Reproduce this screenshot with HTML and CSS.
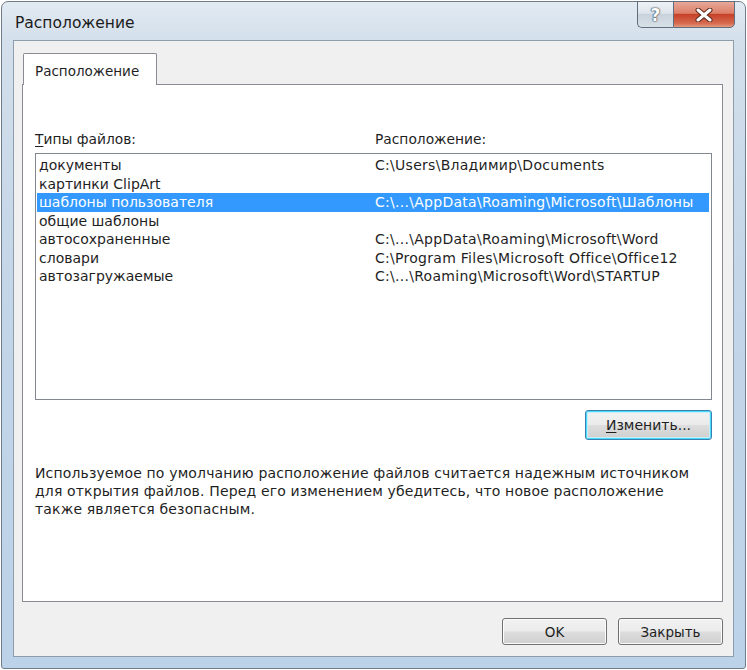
FILE: index.html
```html
<!DOCTYPE html>
<html lang="ru">
<head>
<meta charset="utf-8">
<title>Расположение</title>
<link rel="stylesheet" href="styles.css">
</head>
<body>
<div class="window">
  <div class="titlebar">
    <span class="title">Расположение</span>
    <div class="caption">
      <div class="cap help">?</div>
      <div class="cap close">
        <svg width="20" height="14" viewBox="0 0 20 14"><path d="M4 2 L16 12 M16 2 L4 12" stroke="#5a2a20" stroke-width="5" stroke-linecap="round"/><path d="M4 2 L16 12 M16 2 L4 12" stroke="#ffffff" stroke-width="3" stroke-linecap="round"/></svg>
      </div>
    </div>
  </div>
  <div class="client">
    <div class="tabs"><div class="tab">Расположение</div></div>
    <div class="panel">
      <div class="heads"><span><span class="ul">Т</span>ипы файлов:</span><span>Расположение:</span></div>
      <div class="list">
        <div class="row"><span>документы</span><span class="path">C:\Users\Владимир\Documents</span></div>
        <div class="row"><span>картинки ClipArt</span><span class="path"></span></div>
        <div class="row sel"><span>шаблоны пользователя</span><span class="path">C:\...\AppData\Roaming\Microsoft\Шаблоны</span></div>
        <div class="row"><span>общие шаблоны</span><span class="path"></span></div>
        <div class="row"><span>автосохраненные</span><span class="path">C:\...\AppData\Roaming\Microsoft\Word</span></div>
        <div class="row"><span>словари</span><span class="path">C:\Program Files\Microsoft Office\Office12</span></div>
        <div class="row"><span>автозагружаемые</span><span class="path">C:\...\Roaming\Microsoft\Word\STARTUP</span></div>
      </div>
      <div class="modrow"><button class="btn focus"><span class="ul">И</span>зменить...</button></div>
      <p class="note">Используемое по умолчанию расположение файлов считается надежным источником<br>для открытия файлов. Перед его изменением убедитесь, что новое расположение<br>также является безопасным.</p>
    </div>
    <div class="footer">
      <button class="btn small">OK</button>
      <button class="btn small">Закрыть</button>
    </div>
  </div>
</div>
</body>
</html>
```

FILE: styles.css
```css
* { box-sizing: border-box; }
html, body { margin: 0; padding: 0; background: #ffffff; }
body {
  width: 747px;
  height: 670px;
  padding: 1px;
  font-family: "DejaVu Sans", sans-serif;
  font-size: 13.5px;
  color: #1f1f1f;
}
.window {
  width: 745px;
  height: 668px;
  border: 1px solid #6f7c8a;
  border-radius: 7px 7px 3px 3px;
  background: linear-gradient(180deg, #e2eaf2 0%, #d3dfeb 6%, #c4d6e8 40%, #bcd2e8 100%);
  padding: 0 11px 11px 11px;
  display: flex;
  flex-direction: column;
}
.titlebar {
  height: 38px;
  display: flex;
  justify-content: space-between;
  align-items: flex-start;
  margin-left: -11px;
  margin-right: -1px;
  padding-left: 13px;
}
.title {
  font-size: 15.5px;
  color: #1b1b1b;
  line-height: 18px;
  margin-top: 12px;
}
.caption {
  display: flex;
  margin-top: -1px;
}
.cap {
  height: 27px;
  border: 1px solid #5f6d7c;
  display: flex;
  align-items: center;
  justify-content: center;
}
.help {
  width: 36px;
  border-right: none;
  border-radius: 0 0 0 5px;
  background: linear-gradient(180deg, #eef2f6 0%, #dde4eb 45%, #c9d2dc 50%, #d8e0e8 100%);
  color: #ffffff;
  font-family: "DejaVu Sans", sans-serif;
  font-weight: bold;
  font-size: 17px;
  text-shadow: 0 0 1px #3d4a57, 0 0 1px #3d4a57, 0 0 2px #3d4a57;
}
.close {
  width: 62px;
  border-radius: 0 0 5px 0;
  background: linear-gradient(180deg, #e9a898 0%, #dc7f69 45%, #c74128 50%, #d56a4f 85%, #e69a7f 100%);
}
.client {
  flex: 1;
  background: #f0f0f0;
  border: 1px solid #8e9dab;
  padding: 12px 10px 11px 8px;
  display: flex;
  flex-direction: column;
}
.tabs { display: flex; height: 31px; }
.tab {
  margin-left: 1px;
  width: 134px;
  height: 32px;
  background: #ffffff;
  border: 1px solid #898c95;
  border-bottom: none;
  border-radius: 2px 2px 0 0;
  padding: 8px 0 0 11px;
  line-height: 18px;
  position: relative;
  z-index: 1;
}
.panel {
  height: 518px;
  background: #ffffff;
  border: 1px solid #898c95;
  padding: 45px 10px 0 12px;
}
.heads {
  display: grid;
  grid-template-columns: 340px 1fr;
  line-height: 18px;
  height: 18px;
  margin-bottom: 5px;
  font-size: 13.8px;
}
.ul { text-decoration: underline; text-underline-offset: 2px; }
.list {
  height: 247px;
  border: 1px solid #828790;
  padding: 2px 2px 0 1px;
  font-size: 14px;
}
.row {
  display: grid;
  grid-template-columns: 336px 1fr;
  height: 18.5px;
  line-height: 18.5px;
  padding-left: 2px;
  white-space: nowrap;
}
.path { letter-spacing: 0.28px; }
.row.sel { background: #3399ff; color: #ffffff; }
.modrow {
  display: flex;
  justify-content: flex-end;
  margin-top: 10px;
}
.btn {
  font-family: "DejaVu Sans", sans-serif;
  font-size: 13.5px;
  color: #1f1f1f;
  border: 1px solid #707070;
  border-radius: 3px;
  background: linear-gradient(180deg, #f2f2f2 0%, #ebebeb 48%, #dddddd 52%, #cfcfcf 100%);
  box-shadow: inset 0 0 0 1px #fcfcfc;
  padding: 0;
}
.btn.focus {
  width: 127px;
  height: 30px;
  border-color: #3c7fb1;
  box-shadow: inset 0 0 0 1px #48dbfb, inset 0 0 0 2px #c6eefc;
  font-size: 14px;
}
.note {
  margin: 24px 0 0 0;
  line-height: 18px;
  font-size: 14px;
  letter-spacing: 0.15px;
}
.footer {
  display: flex;
  justify-content: flex-end;
  gap: 11px;
  margin-top: 16px;
}
.btn.small { width: 105px; height: 27px; }
```
